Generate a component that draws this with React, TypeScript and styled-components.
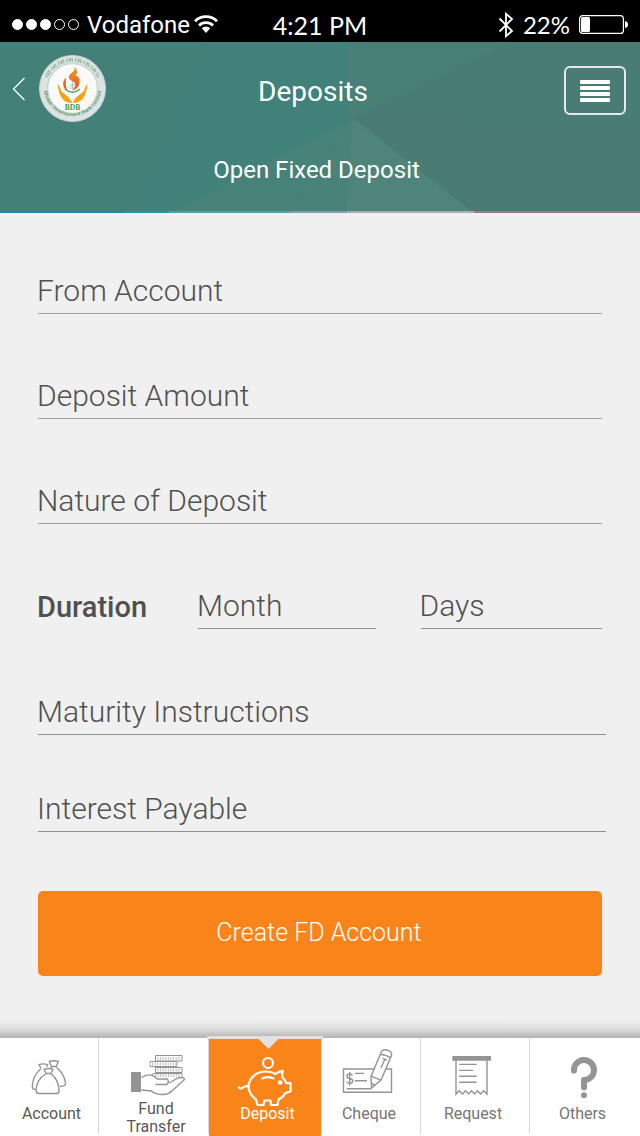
import React from 'react';
import styled, { createGlobalStyle, css } from 'styled-components';

const GlobalStyle = createGlobalStyle`
  *, *::before, *::after { box-sizing: border-box; }
  body { margin: 0; background: #f0f0f0; font-family: Roboto, "Liberation Sans", sans-serif; }
  button, input { font: inherit; }
`;

const Page = styled.div`
  display: flex;
  flex-direction: column;
  min-height: 100vh;
`;

/* ---------- status bar ---------- */

const StatusBar = styled.div`
  display: grid;
  grid-template-columns: 1fr auto 1fr;
  align-items: center;
  height: 42px;
  padding: 7px 12px 0;
  background: #000;
  color: #fff;
  font-size: 24px;
  line-height: 28px;
`;

const StatusGroup = styled.div<{ $end?: boolean }>`
  display: flex;
  align-items: center;
  justify-content: ${(p) => (p.$end ? 'flex-end' : 'flex-start')};
  gap: ${(p) => (p.$end ? '9px' : '4px')};
`;

const Signal = styled.div`
  display: flex;
  gap: 3px;
  margin-right: 4px;
`;

const Dot = styled.span<{ $on: boolean }>`
  width: 11px;
  height: 11px;
  border: 1px solid #fff;
  border-radius: 50%;
  background: ${(p) => (p.$on ? '#fff' : 'transparent')};
`;

const Clock = styled.span`
  font-family: Lato, sans-serif;
  font-size: 25px;
`;

const Percent = styled.span`
  font-family: Lato, sans-serif;
`;

/* ---------- header ---------- */

const Header = styled.header`
  position: relative;
  padding-bottom: 29px;
  background: #43817a;
  color: #fff;
`;

const Facets = styled.svg`
  position: absolute;
  inset: 0;
  width: 100%;
  height: 100%;
`;

const TitleRow = styled.div`
  position: relative;
  display: grid;
  grid-template-columns: 1fr auto 1fr;
  align-items: center;
  height: 97px;
  padding-right: 14px;
`;

const Brand = styled.div`
  display: flex;
  align-items: center;
  gap: 13px;
  padding: 0 0 4px 12px;
`;

const BackButton = styled.button`
  display: flex;
  padding: 0;
  border: 0;
  background: none;
  cursor: pointer;
`;

const Title = styled.h1`
  margin: 2px 0 0;
  font-size: 28px;
  line-height: 32px;
  font-weight: 400;
`;

const MenuButton = styled.button`
  display: flex;
  flex-direction: column;
  justify-content: center;
  align-items: center;
  gap: 2px;
  justify-self: end;
  width: 62px;
  height: 49px;
  padding: 0;
  border: 2px solid #ebe6e8;
  border-radius: 6px;
  background: none;
  cursor: pointer;
`;

const MenuBar = styled.span`
  width: 30px;
  height: 4px;
  border-radius: 1px;
  background: #fff;
`;

const Subtitle = styled.h2`
  position: relative;
  margin: 17px 7px 0 0;
  font-size: 24px;
  line-height: 28px;
  font-weight: 400;
  text-align: center;
`;

/* ---------- form ---------- */

const Main = styled.main`
  flex: 1;
  padding: 60px 38px 44px;
`;

const Group = styled.div<{ $wide?: boolean }>`
  display: flex;
  flex-direction: column;
  gap: 64px;
  ${(p) =>
    p.$wide &&
    css`
      gap: 56px;
      margin: 65px -4px 0 0;
    `}
`;

const Field = styled.input<{ $dark?: boolean }>`
  width: 100%;
  min-width: 0;
  height: 41px;
  padding: 0 0 5px;
  border: 0;
  border-bottom: 1px solid ${(p) => (p.$dark ? '#8f8f8f' : '#a0a0a0')};
  border-radius: 0;
  outline: 0;
  background: none;
  color: #505050;
  font-size: 30px;
  font-weight: 300;
  text-indent: -1px;
  &::placeholder { color: #505050; opacity: 1; }
`;

const DurationRow = styled.div`
  display: grid;
  grid-template-columns: 115px 178fr 182fr;
  align-items: center;
  gap: 45px;
`;

const DurationLabel = styled.span`
  padding-bottom: 4px;
  color: #505050;
  font-size: 29px;
  line-height: 36px;
  font-weight: 500;
  text-indent: -1px;
`;

const SubmitButton = styled.button`
  display: block;
  width: 100%;
  height: 85px;
  margin-top: 59px;
  padding: 0 2px 2px 0;
  border: 0;
  border-radius: 5px;
  background: #f98419;
  color: #fff;
  font-size: 25px;
  font-weight: 300;
  cursor: pointer;
`;

/* ---------- tab bar ---------- */

const Footer = styled.footer`
  &::before {
    content: '';
    display: block;
    height: 18px;
    background: linear-gradient(#f0f0f0, #dcdcdc 50%, #b2b2b2);
  }
`;

const Tabs = styled.nav`
  display: grid;
  grid-template-columns: 99fr 110fr 113fr 99fr 109fr 110fr;
  height: 98px;
  background: #fff;
`;

const TabLabel = styled.span<{ $raised?: boolean }>`
  width: 70px;
  margin-top: ${(p) => (p.$raised ? '-4px' : '1px')};
`;

const Tab = styled.a<{ $active?: boolean; $dark?: boolean }>`
  position: relative;
  display: flex;
  flex-direction: column;
  align-items: center;
  padding-top: 8px;
  color: ${(p) => (p.$dark ? '#585858' : '#757575')};
  font-size: 16px;
  line-height: 18px;
  text-align: center;
  text-decoration: none;

  &:not(:last-child)::after {
    content: '';
    position: absolute;
    top: 0;
    right: 0;
    bottom: 2px;
    width: 1px;
    background: #d8d8d8;
  }

  &:nth-child(-n + 3) ${TabLabel} { padding-left: 4px; }
  &:nth-child(n + 4) ${TabLabel} { padding-right: 5px; }

  ${(p) =>
    p.$active &&
    css`
      color: #fff;
      background: linear-gradient(to right, #f98419 calc(100% - 1px), #fff 0);
      &::before {
        content: '';
        position: absolute;
        top: -2px;
        left: -2px;
        right: -1px;
        height: 3px;
        background: #e2e2e2;
      }
    `}
`;

const Notch = styled.span`
  position: absolute;
  top: 0;
  left: 50%;
  width: 22px;
  height: 11px;
  margin-left: -8px;
  background: #e2e2e2;
  clip-path: polygon(0 0, 100% 0, 50% 100%);
`;

const TabIcon = styled.svg<{ $light?: boolean }>`
  flex: none;
  width: 60px;
  height: 58px;
  overflow: visible;
  fill: none;
  stroke: ${(p) => (p.$light ? '#fff' : '#949494')};
  stroke-width: ${(p) => (p.$light ? 2.2 : 1.4)};
`;

/* ---------- drawings ---------- */

const Wifi = () => (
  <svg width="24" height="19" viewBox="0 0 24 19" fill="none" stroke="#fff" strokeWidth="2.8" aria-hidden="true">
    <path d="M1 6.2A15.5 15.5 0 0 1 23 6.2" />
    <path d="M5 10.4A10 10 0 0 1 19 10.4" />
    <path d="M7.8 13.2A6 6 0 0 1 16.2 13.2L12 18Z" fill="#fff" stroke="none" />
  </svg>
);

const Bluetooth = () => (
  <svg width="16" height="26" viewBox="0 0 16 26" fill="none" stroke="#fff" strokeWidth="1.8" aria-hidden="true">
    <path d="M1.5 6.5L14 19L8 24.2V1.8L14 7L1.5 19.5" />
  </svg>
);

const Battery = () => (
  <svg width="49" height="19" viewBox="0 0 49 19" aria-hidden="true">
    <rect x="0.6" y="0.6" width="43.8" height="17.8" rx="3" fill="none" stroke="#fff" strokeWidth="1.2" />
    <rect x="2" y="2" width="9" height="15" rx="1.5" fill="#fff" />
    <path d="M46 6Q49 6.500 49 9.500T46 13Z" fill="#fff" />
  </svg>
);

const Logo = () => (
  <svg width="67" height="67" viewBox="0 0 67 67" role="img" aria-label="Bhutan Development Bank Limited">
    <defs>
      <path id="ring" d="M4.500 32A29 29 0 0 0 62.500 32" />
      <linearGradient id="flame" x1="0" y1="0" x2="0" y2="1">
        <stop offset="0" stopColor="#f3a024" />
        <stop offset="1" stopColor="#e5541c" />
      </linearGradient>
    </defs>
    <circle cx="33.500" cy="33.500" r="33" fill="#dde2e2" stroke="#c6d5cf" strokeWidth="1" />
    <circle cx="33.500" cy="33.500" r="25" fill="#fafafa" stroke="#cfd2d2" strokeWidth="1.500" />
    <g fill="none" stroke="#7ab58b">
      <path d="M7.800 22A28.200 28.200 0 0 1 59.200 22" strokeWidth="2.400" strokeDasharray="1 1.500 1.800 1 1.200 2.200" />
      <path d="M6.500 20.500A30 30 0 0 1 60.500 20.500" strokeWidth=".9" strokeDasharray="2 1.600 3 2.400" />
    </g>
    <text fill="#5ba570" fontFamily="Liberation Sans, sans-serif" fontWeight="700" fontSize="5">
      <textPath href="#ring" startOffset="50%" textAnchor="middle">Bhutan Development Bank Limited</textPath>
    </text>
    <path d="M35.500 11.500C38.500 15 39 18 36.500 20.500C41 21 41.500 27 39.500 31Q37.500 34.500 33 35.500C36.500 32 38 28.500 34 26.500C28.500 24 29 20.500 32.500 18C35.500 16 36 14 35.500 11.500Z" fill="url(#flame)" />
    <path d="M27 22.500C23 26.500 23 32.500 28.500 36.500C26.500 31.500 26.500 27 27 22.500Z" fill="#e8641e" />
    <path d="M26 34Q33.500 40.500 41 34" fill="none" stroke="#4ba269" strokeWidth="1.300" />
    <path d="M33.500 26V34M30.500 31L33.500 29L36.500 31M31 33H36" fill="none" stroke="#86bd96" strokeWidth=".7" />
    <path d="M33 48C25 48 20 43 18.500 29Q21 31 22 36L27 40Q31.500 43 33 48Z" fill="#f5a313" />
    <path d="M34 48C42 48 47 43 48.500 29Q46 31 45 36L40 40Q35.500 43 34 48Z" fill="#f5a313" />
    <text x="33.500" y="55" textAnchor="middle" fill="#3b9a52" fontFamily="Liberation Serif, serif" fontWeight="700" fontSize="7.500">BDB</text>
  </svg>
);

const HeaderArt = () => (
  <Facets viewBox="0 0 640 171" preserveAspectRatio="none" aria-hidden="true">
    <rect width="640" height="171" fill="#428078" />
    <path d="M205 0H347V80L353 76L347 171H136Z" fill="#408279" />
    <path d="M347 0H510L353 76H347Z" fill="#488078" />
    <path d="M510 0H640V171H474L353 76Z" fill="#497c75" />
    <path d="M353 76L640 92V171H474Z" fill="#4b7c74" />
    <path d="M353 76L169 171H347Z" fill="#468278" />
    <path d="M353 76L290 171H347Z" fill="#498279" />
    <path d="M353 76L346 171H474Z" fill="#4e847a" />
    <g>
      <path d="M0 169H123V171H0Z" fill="#168bb0" />
      <path d="M123 169H169V171H123Z" fill="#189bae" />
      <path d="M169 169H290V171H169Z" fill="#4ca1ab" />
      <path d="M290 169H347V171H290Z" fill="#7aa2a8" />
      <path d="M347 169H474V171H347Z" fill="#a5adae" />
      <path d="M474 169H640V171H474Z" fill="#937a8c" />
    </g>
  </Facets>
);

const AccountIcon = () => (
  <TabIcon viewBox="1 0 60 58" aria-hidden="true">
    <path d="M22 22.500L20 18.700Q24 17 28.700 18.700L27.500 21M21.600 23C17 27 13.500 33 13.300 40.500Q13.300 43.500 16.500 43.500" />
    <path d="M32.500 20.500L30.300 15.500Q35 14 39.300 15.500L37.200 20.500H33L31.500 23M37.500 21.500C42.500 25.500 46 32 46.600 37.500Q46.500 40.300 41 40.500" />
    <path d="M27.200 27.500L25 23.300Q29.500 21.800 34 23.300L31.800 27.500H27.200C20.500 31.500 17 38 17.200 45Q17.300 47.500 20 47.500H37.500Q40 47.500 40 45C40 38 37 31.500 31.800 27.500" />
  </TabIcon>
);

const TransferIcon = () => (
  <TabIcon viewBox="0 0 60 58" aria-hidden="true">
    <g strokeWidth="1">
      <path d="M31.500 9.500H58V15H31.500ZM26 15.500H53V20.500H26ZM31.500 21.500H58V26.500H31.500ZM27 31L29 27.500H58V31" />
    </g>
    <g strokeWidth="2.800" strokeDasharray="1 1.600" opacity=".65">
      <path d="M33.500 12.300H57M28 18H52M33.500 24H57M31 29.500H56" />
    </g>
    <path d="M7 26H17V46H7Z" fill="#949494" stroke="none" />
    <path d="M17.500 31.500Q23 27.500 28.500 29.500L33.500 33H43Q46 35.500 42.500 38.500H31.500M45 37L54 32Q60 30.500 60.500 33.500L48.500 44.500Q45 48 40 48.500Q32 49 27.500 45L17.500 44" fill="#fff" />
  </TabIcon>
);

const PiggyIcon = () => (
  <TabIcon $light viewBox="0 0 60 58" aria-hidden="true">
    <circle cx="32" cy="17" r="5" />
    <path d="M3 41.500Q4.500 43.500 7 41.500T12 40.500" strokeLinecap="round" />
    <path d="M12.500 40C13.500 31 21 25.500 30 25.500Q35.500 25.500 39.500 28Q42.500 25.200 47 24.800Q45.300 29 47 32Q49.500 34.500 50.300 37.200H54.500V45.500L49.500 47Q47 51.500 42.500 53.500L41.500 59H35L34.500 54.500H28.500L27.500 59H21.500L20 53.500Q12.500 48 12.500 40Z" strokeLinejoin="round" />
    <path d="M25.500 32.800Q31.500 29.500 38.500 32.800" />
    <circle cx="44.200" cy="36.500" r="2.300" fill="#fff" stroke="none" />
  </TabIcon>
);

const ChequeIcon = () => (
  <TabIcon viewBox="1 0 60 58" aria-hidden="true">
    <path d="M2.500 23H50.500V46.300H2.500Z" />
    <path d="M11.500 29.500Q10.500 28 8.700 28Q5.800 28 5.800 30.300Q5.800 32 8.700 32.500T11.700 35Q11.700 37.300 8.700 37.300Q6.500 37.300 5.500 35.500M8.700 26V39.500" />
    <path d="M13.700 27.400H23M13.700 34.700H26M5.700 42.700H30" />
    <path d="M40.500 5.500Q42 2.800 47 4.300Q51.500 6 50.500 9.500L40 34L30.500 42L30 30.500Z" fill="#fff" />
    <path d="M39.500 8.500Q44.500 8.500 49.800 12M30 30.200L40 34.200M30.500 37.500L34 39M44 13L40 22M41.500 12.300L46 14" />
  </TabIcon>
);

const RequestIcon = () => (
  <TabIcon viewBox="1 0 60 58" aria-hidden="true">
    <path d="M7.300 10H46V14.700H7.300Z" fill="#949494" stroke="none" />
    <path d="M11 14V48L14.300 44.700L17.500 48L20.600 44.700L23.700 48L26.500 44.700L29.500 48L32.500 44.700L35.600 48L38.700 44.700L42 48V14M14 18.400H31.700M14 24.400H28M14 30.200H31.700M14 36.300H31.700" />
  </TabIcon>
);

const OthersIcon = () => (
  <TabIcon viewBox="0 0 60 58" aria-hidden="true">
    <path d="M19 24.500A10 10 0 1 1 29 34V41.500" strokeWidth="6" strokeLinecap="round" strokeLinejoin="round" />
    <circle cx="29" cy="49.300" r="3" fill="#949494" stroke="none" />
  </TabIcon>
);

const tabs = [
  { label: 'Account', icon: <AccountIcon />, dark: true },
  { label: 'Fund Transfer', icon: <TransferIcon />, dark: true, raised: true },
  { label: 'Deposit', icon: <PiggyIcon />, active: true },
  { label: 'Cheque', icon: <ChequeIcon /> },
  { label: 'Request', icon: <RequestIcon /> },
  { label: 'Others', icon: <OthersIcon /> },
];

export default function App() {
  return (
    <Page>
      <GlobalStyle />
      <StatusBar>
        <StatusGroup>
          <Signal>
            {[true, true, true, false, false].map((on, i) => (
              <Dot key={i} $on={on} />
            ))}
          </Signal>
          <span>Vodafone</span>
          <Wifi />
        </StatusGroup>
        <Clock>4:21 PM</Clock>
        <StatusGroup $end>
          <Bluetooth />
          <Percent>22%</Percent>
          <Battery />
        </StatusGroup>
      </StatusBar>

      <Header>
        <HeaderArt />
        <TitleRow>
          <Brand>
            <BackButton type="button" aria-label="Back">
              <svg width="14" height="24" viewBox="0 0 14 24" fill="none" stroke="#fff" strokeWidth="1.200">
                <path d="M12.500 1L1.500 12L12.500 23" />
              </svg>
            </BackButton>
            <Logo />
          </Brand>
          <Title>Deposits</Title>
          <MenuButton type="button" aria-label="Menu">
            <MenuBar />
            <MenuBar />
            <MenuBar />
            <MenuBar />
          </MenuButton>
        </TitleRow>
        <Subtitle>Open Fixed Deposit</Subtitle>
      </Header>

      <Main>
        <form onSubmit={(e) => e.preventDefault()}>
          <Group>
            <Field aria-label="From Account" placeholder="From Account" />
            <Field aria-label="Deposit Amount" placeholder="Deposit Amount" inputMode="decimal" />
            <Field aria-label="Nature of Deposit" placeholder="Nature of Deposit" />
            <DurationRow role="group" aria-labelledby="duration">
              <DurationLabel id="duration">Duration</DurationLabel>
              <Field $dark aria-label="Month" placeholder="Month" inputMode="numeric" />
              <Field $dark aria-label="Days" placeholder="Days" inputMode="numeric" />
            </DurationRow>
          </Group>
          <Group $wide>
            <Field $dark aria-label="Maturity Instructions" placeholder="Maturity Instructions" />
            <Field $dark aria-label="Interest Payable" placeholder="Interest Payable" />
          </Group>
          <SubmitButton type="submit">Create FD Account</SubmitButton>
        </form>
      </Main>

      <Footer>
        <Tabs>
          {tabs.map((t) => (
            <Tab key={t.label} href="#" $active={t.active} $dark={t.dark} aria-current={t.active ? 'page' : undefined}>
              {t.active && <Notch />}
              {t.icon}
              <TabLabel $raised={t.raised}>{t.label}</TabLabel>
            </Tab>
          ))}
        </Tabs>
      </Footer>
    </Page>
  );
}
